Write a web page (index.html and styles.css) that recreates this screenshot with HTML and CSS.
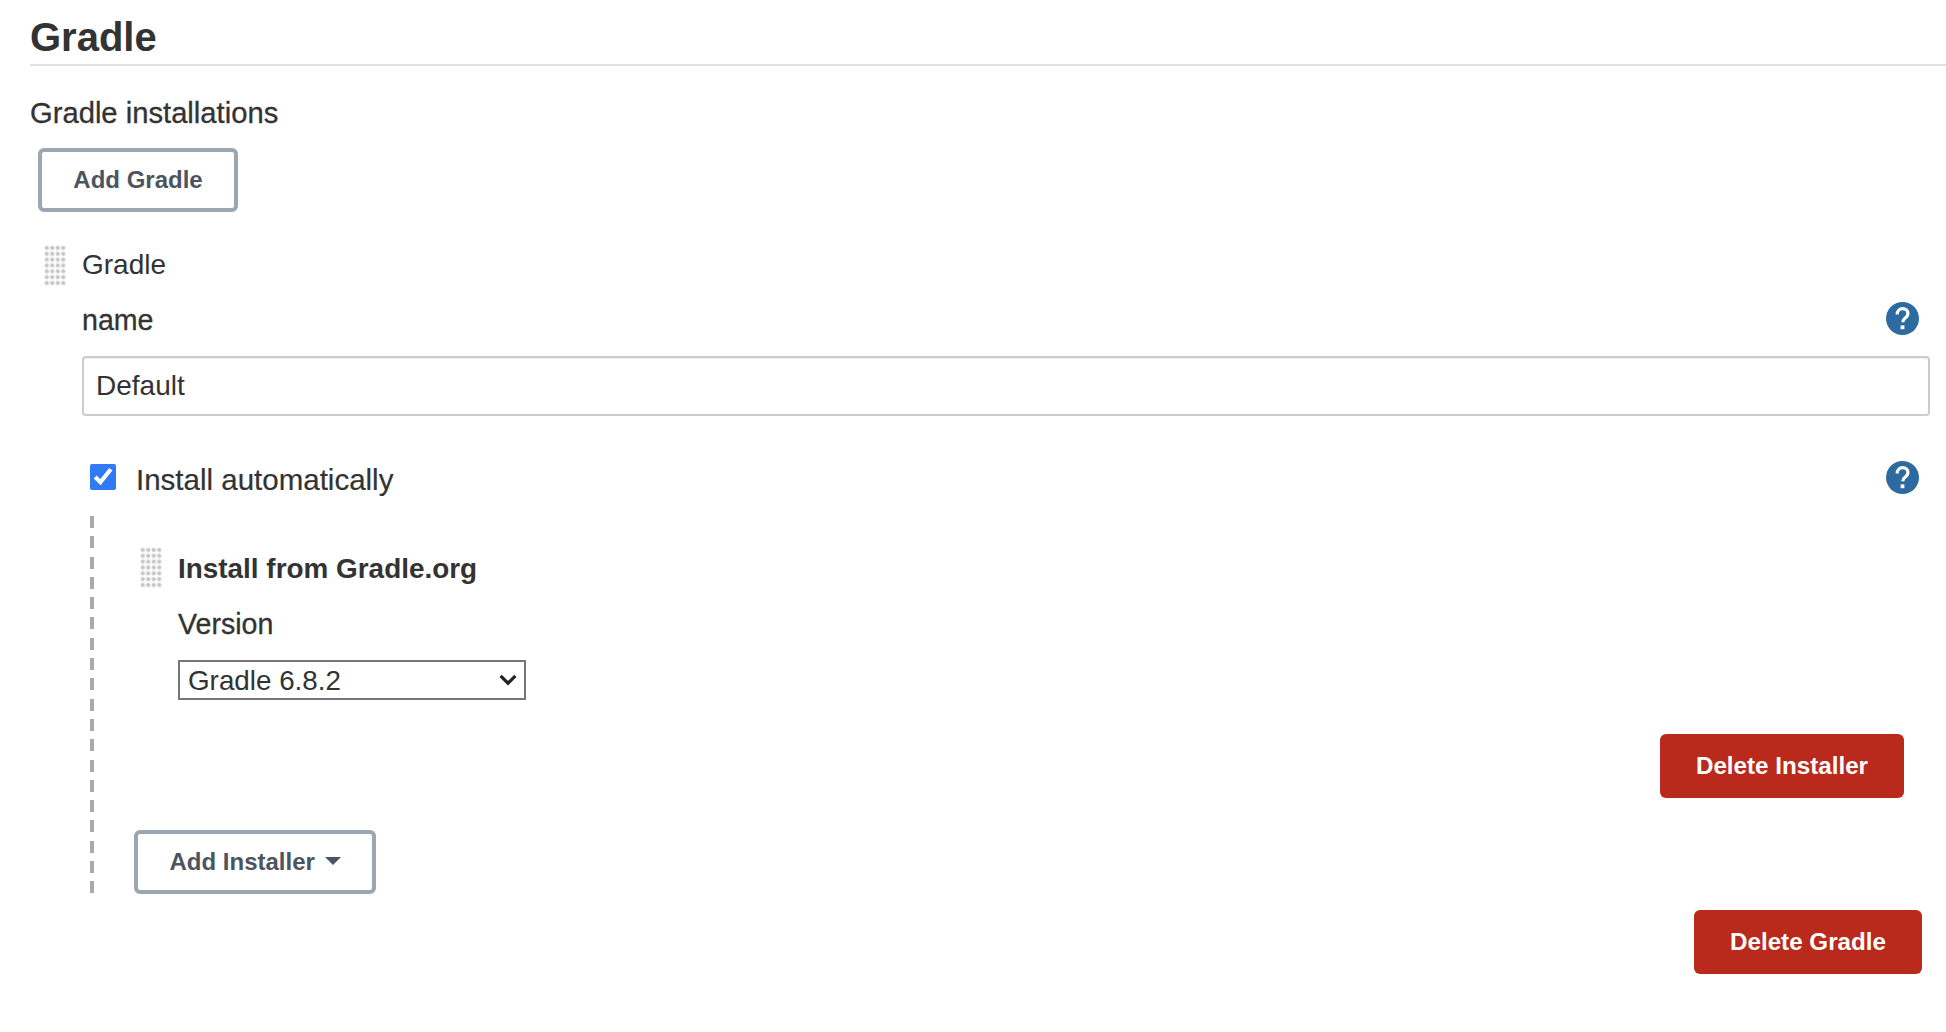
FILE: index.html
```html
<!DOCTYPE html>
<html lang="en">
<head>
    <meta charset="UTF-8">
    <meta name="viewport" content="width=device-width, initial-scale=1.0">
    <title>Gradle</title>
    <link rel="stylesheet" href="styles.css">
</head>
<body>
    <h1 class="section-title">Gradle</h1>
    <div class="setting-label">Gradle installations</div>
    <button class="btn btn-outline btn-add-gradle">Add Gradle</button>

    <div class="tool">
        <div class="item-head">
            <span class="grip"></span>
            <span class="item-name">Gradle</span>
        </div>
        <div class="tool-body">
            <div class="field-row">
                <label class="field-label" for="gradle-name">name</label>
                <svg class="help" viewBox="0 0 33 33" aria-hidden="true">
                    <circle cx="16.5" cy="16.5" r="16.5" fill="#2d6a9f"/>
                    <path d="M11.2 12.4c0-3.4 2.2-5.7 5.4-5.7s5.3 2 5.3 4.8c0 2.3-1.2 3.4-2.7 4.5-1.6 1.2-2.4 2-2.4 4.2" fill="none" stroke="#fff" stroke-width="3.2"/>
                    <rect x="14.6" y="23.4" width="3.8" height="3.8" fill="#fff"/>
                </svg>
            </div>
            <input class="text-input" id="gradle-name" type="text" value="Default">

            <div class="field-row check-row">
                <div class="check-wrap">
                    <input class="check" id="install-auto" type="checkbox" checked>
                    <label class="check-label" for="install-auto">Install automatically</label>
                </div>
                <svg class="help" viewBox="0 0 33 33" aria-hidden="true">
                    <circle cx="16.5" cy="16.5" r="16.5" fill="#2d6a9f"/>
                    <path d="M11.2 12.4c0-3.4 2.2-5.7 5.4-5.7s5.3 2 5.3 4.8c0 2.3-1.2 3.4-2.7 4.5-1.6 1.2-2.4 2-2.4 4.2" fill="none" stroke="#fff" stroke-width="3.2"/>
                    <rect x="14.6" y="23.4" width="3.8" height="3.8" fill="#fff"/>
                </svg>
            </div>

            <div class="installers">
                <div class="item-head">
                    <span class="grip"></span>
                    <span class="item-name installer-name">Install from Gradle.org</span>
                </div>
                <div class="installer-body">
                    <label class="field-label version-label" for="version">Version</label>
                    <div class="select-wrap">
                        <select class="select" id="version">
                            <option>Gradle 6.8.2</option>
                        </select>
                        <svg class="chevron" viewBox="0 0 18 12" aria-hidden="true">
                            <path d="M1.6 1.8 9 9.2l7.4-7.4" fill="none" stroke="#222" stroke-width="3.2"/>
                        </svg>
                    </div>
                </div>
                <div class="delete-row delete-installer">
                    <button class="btn btn-danger">Delete Installer</button>
                </div>
                <button class="btn btn-outline btn-add-installer">Add Installer <span class="caret"></span></button>
            </div>

            <div class="delete-row delete-gradle">
                <button class="btn btn-danger">Delete Gradle</button>
            </div>
        </div>
    </div>
</body>
</html>
```

FILE: styles.css
```css
body {
    margin: 0;
    padding-left: 30px;
    background-color: #fff;
    color: #333;
    font-family: "Liberation Sans", Arial, sans-serif;
    font-size: 29px;
    line-height: 36px;
}
button, input, select {
    font-family: inherit;
}
.section-title {
    margin: 0;
    padding: 15px 0 5px;
    font-size: 40px;
    line-height: 44px;
    font-weight: bold;
    border-bottom: 2px solid #e1e1e1;
}
.setting-label {
    margin-top: 28px;
    padding-top: 1px;
    margin-bottom: -1px;
    font-size: 29.2px;
    -webkit-text-stroke: 0.3px #333;
}
.btn {
    display: block;
    height: 64px;
    padding: 0;
    border-radius: 6px;
    font-size: 24px;
    font-weight: bold;
    cursor: pointer;
}
.btn-outline {
    background-color: #fff;
    border: 4px solid #9aa7b0;
    color: #4a5560;
}
.btn-danger {
    background-color: #ba2a1c;
    border: none;
    color: #fff;
    font-size: 24.2px;
}
.btn-add-gradle {
    width: 200px;
    margin: 18px 0 0 8px;
}
.tool {
    margin: 33px 16px 0 14px;
}
.item-head {
    display: flex;
    align-items: center;
    gap: 16px;
}
.grip {
    width: 22px;
    height: 41px;
    background-image: radial-gradient(circle, #c4c4c4 1.3px, #eee 2.2px, transparent 3px);
    background-size: 5.5px 5.85px;
}
.item-name {
    margin-top: -2px;
    font-size: 28px;
}
.tool-body {
    margin-left: 38px;
}
.field-row {
    display: flex;
    justify-content: space-between;
    align-items: flex-start;
    margin-top: 16px;
    padding-right: 11px;
}
.field-label {
    font-size: 28.6px;
    -webkit-text-stroke: 0.3px #333;
}
.help {
    width: 33px;
    height: 33px;
}
.text-input {
    display: block;
    box-sizing: border-box;
    width: 100%;
    height: 60px;
    margin-top: 18px;
    padding: 0 12px;
    border: 2px solid #ccc;
    border-radius: 4px;
    box-shadow: inset 0 1px 1px rgba(0, 0, 0, 0.06);
    color: #333;
    font-size: 28px;
}
.check-row {
    margin-top: 46px;
}
.check-row .help {
    margin-top: -1px;
}
.check-wrap {
    display: flex;
    align-items: flex-start;
    gap: 20px;
    margin-left: 8px;
}
.check {
    width: 26px;
    height: 26px;
    margin: 2px 0 0;
    accent-color: #2f7bf6;
}
.check-label {
    font-size: 29.5px;
    -webkit-text-stroke: 0.2px #333;
}
.installers {
    margin: 18px 0 0 8px;
    padding: 31px 26px 0 50px;
    background-image: repeating-linear-gradient(to bottom, #aaa 0, #aaa 12px, transparent 12px, transparent 20.3px);
    background-size: 4px 100%;
    background-repeat: no-repeat;
}
.installer-name {
    margin-top: 2px;
    font-size: 27.9px;
    font-weight: bold;
}
.installer-body {
    margin-left: 38px;
}
.version-label {
    display: block;
    margin-top: 18px;
}
.select-wrap {
    position: relative;
    width: 348px;
    margin-top: 18px;
}
.select {
    display: block;
    box-sizing: border-box;
    width: 100%;
    height: 40px;
    padding: 0 0 0 8px;
    border: 2px solid #767676;
    border-radius: 0;
    background-color: #fff;
    color: #333;
    font-size: 27.8px;
    appearance: none;
}
.chevron {
    position: absolute;
    top: 14px;
    right: 9px;
    width: 18px;
    height: 12px;
}
.delete-row {
    display: flex;
    justify-content: flex-end;
}
.delete-installer {
    margin-top: 34px;
}
.delete-installer .btn {
    width: 244px;
}
.btn-add-installer {
    width: 242px;
    margin: 32px 0 0 -6px;
}
.caret {
    display: inline-block;
    width: 0;
    height: 0;
    margin-left: 3px;
    vertical-align: 5px;
    border-top: 8px solid #4a5560;
    border-left: 8px solid transparent;
    border-right: 8px solid transparent;
}
.delete-gradle {
    margin-top: 16px;
    padding-right: 8px;
}
.delete-gradle .btn {
    width: 228px;
}
```
